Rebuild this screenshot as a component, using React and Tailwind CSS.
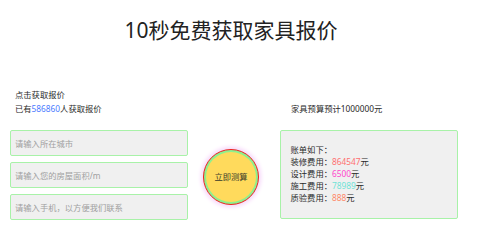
export default function App() {
  const bill = [
    { label: "装修费用：", value: "864547", color: "text-[#ff6f6f]" },
    { label: "设计费用：", value: "6500", color: "text-[#ff44cc]" },
    { label: "施工费用：", value: "78989", color: "text-[#6fe3d6]" },
    { label: "质验费用：", value: "888", color: "text-[#ff8866]" }
  ];

  const inputClass =
    "h-[26px] w-full rounded-[2px] border-[1.5px] border-[#a8f2a8] bg-[#f0f0f0] px-[4px] text-[8.3px] text-[#333] outline-none placeholder:text-[#a0a0a0]";

  return (
    <div
      className="min-h-[246px] w-full bg-white text-[#2a2a2a]"
      style={{ fontFamily: '"Noto Sans", "Noto Sans CJK SC", sans-serif' }}
    >
      <h1 className="w-[462px] pt-[18px] text-center text-[21px] leading-[25px] font-normal text-[#222]">
        10秒免费获取家具报价
      </h1>

      <div className="mt-[45px] flex pl-[10px]">
        <div className="w-[178px] shrink-0">
          <div className="pl-[5px] text-[8.3px] leading-[14px]">
            <p>点击获取报价</p>
            <p>
              已有<span className="text-[#4a7bff]">586860</span>人获取报价
            </p>
          </div>
          <div className="mt-[14px] flex flex-col gap-[6px]">
            <input className={inputClass} placeholder="请输入所在城市" />
            <input className={inputClass} placeholder="请输入您的房屋面积/m" />
            <input className={inputClass} placeholder="请输入手机，以方便我们联系" />
          </div>
        </div>

        <div className="ml-[15px] mr-[21px] flex shrink-0 items-end pb-[15px]">
          <button className="h-[56px] w-[56px] rounded-full border border-[#f02020] bg-[#8ef08e] p-[2px] shadow-[0_0_4px_2px_#f6d6fa]">
            <span className="flex h-full w-full items-center justify-center rounded-full bg-[#ffda5c] text-[8.3px] text-[#3a3a2a]">
              立即测算
            </span>
          </button>
        </div>

        <div className="w-[178px] shrink-0">
          <p className="pt-[14px] pl-[11px] text-[8.3px] leading-[14px]">家具预算预计1000000元</p>
          <div className="mt-[14px] h-[89px] rounded-[2px] border-[1.5px] border-[#a8f2a8] bg-[#f0f0f0] pt-[13px] pl-[9.5px] text-[8.3px] leading-[12.1px]">
            <p>账单如下：</p>
            {bill.map((row) => (
              <p key={row.label}>
                {row.label}
                <span className={row.color}>{row.value}</span>元
              </p>
            ))}
          </div>
        </div>
      </div>
    </div>
  );
}
